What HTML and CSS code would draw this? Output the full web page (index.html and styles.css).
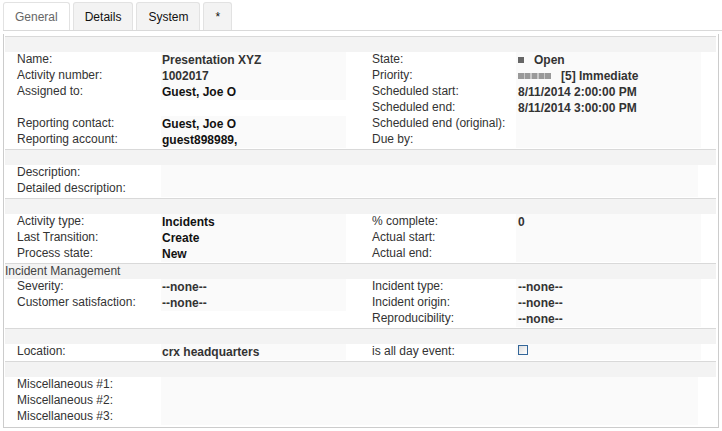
FILE: index.html
```html
<!DOCTYPE html>
<html lang="en">
<head>
<meta charset="utf-8">
<title>Presentation XYZ</title>
<link rel="stylesheet" href="styles.css">
</head>
<body>
<div class="tabs" role="tablist">
  <button class="tab active" type="button" role="tab" aria-selected="true">General</button>
  <button class="tab" type="button" role="tab">Details</button>
  <button class="tab" type="button" role="tab">System</button>
  <button class="tab" type="button" role="tab">*</button>
</div>
<main class="panel">
  <section class="group">
    <h2></h2>
    <div class="columns">
      <dl>
        <dt>Name:</dt><dd>Presentation XYZ</dd>
        <dt>Activity number:</dt><dd>1002017</dd>
        <dt>Assigned to:</dt><dd class="ref">Guest, Joe O</dd>
        <dt></dt><dd class="blank"></dd>
        <dt>Reporting contact:</dt><dd class="ref">Guest, Joe O</dd>
        <dt>Reporting account:</dt><dd class="ref">guest898989,</dd>
      </dl>
      <dl class="second">
        <dt>State:</dt>
        <dd class="rated"><svg class="state" viewBox="0 0 6 6"><path fill="#666" d="M0 0h6v6H0z"/></svg>Open</dd>
        <dt>Priority:</dt>
        <dd class="rated"><svg class="priority" viewBox="0 0 33 6"><path fill="#c8c8c8" d="M0 0h33v6H0z"/><path fill="#999" d="M0 0h6v6H0zM7 0h5v6H7zM14 0h5v6h-5zM21 0h5v6h-5zM27 0h6v6h-6z"/></svg>[5] Immediate</dd>
        <dt>Scheduled start:</dt><dd>8/11/2014 2:00:00 PM</dd>
        <dt>Scheduled end:</dt><dd>8/11/2014 3:00:00 PM</dd>
        <dt>Scheduled end (original):</dt><dd></dd>
        <dt>Due by:</dt><dd></dd>
      </dl>
    </div>
  </section>
  <section class="group">
    <h2></h2>
    <dl class="wide">
      <dt>Description:</dt><dd></dd>
      <dt>Detailed description:</dt><dd></dd>
    </dl>
  </section>
  <section class="group">
    <h2></h2>
    <div class="columns">
      <dl>
        <dt>Activity type:</dt><dd class="ref">Incidents</dd>
        <dt>Last Transition:</dt><dd class="ref">Create</dd>
        <dt>Process state:</dt><dd class="ref">New</dd>
      </dl>
      <dl class="second">
        <dt>% complete:</dt><dd>0</dd>
        <dt>Actual start:</dt><dd></dd>
        <dt>Actual end:</dt><dd></dd>
      </dl>
    </div>
  </section>
  <section class="group">
    <h2>Incident Management</h2>
    <div class="columns">
      <dl>
        <dt>Severity:</dt><dd>--none--</dd>
        <dt>Customer satisfaction:</dt><dd>--none--</dd>
      </dl>
      <dl class="second">
        <dt>Incident type:</dt><dd>--none--</dd>
        <dt>Incident origin:</dt><dd>--none--</dd>
        <dt>Reproducibility:</dt><dd>--none--</dd>
      </dl>
    </div>
  </section>
  <section class="group">
    <h2></h2>
    <div class="columns">
      <dl>
        <dt>Location:</dt><dd>crx headquarters</dd>
      </dl>
      <dl class="second">
        <dt><label for="all-day">is all day event:</label></dt><dd><input id="all-day" type="checkbox"></dd>
      </dl>
    </div>
  </section>
  <section class="group">
    <h2></h2>
    <dl class="wide">
      <dt>Miscellaneous #1:</dt><dd></dd>
      <dt>Miscellaneous #2:</dt><dd></dd>
      <dt>Miscellaneous #3:</dt><dd></dd>
    </dl>
  </section>
</main>
</body>
</html>
```

FILE: styles.css
```css
* {
  box-sizing: border-box;
}

body {
  margin: 0;
  padding-top: 2px;
  background: #fff;
  color: #333;
  font: 12px/16px "Liberation Sans", Arial, sans-serif;
}

.tabs {
  display: flex;
  gap: 3px;
  height: 29px;
  margin-left: 3px;
  border-bottom: 1px solid #d9d9d9;
}

.tab {
  padding: 0 11px;
  border: 1px solid #e2e2e2;
  border-bottom: 0;
  border-radius: 3px 3px 0 0;
  background: #f3f3f3;
  color: #111;
  font: inherit;
}

.tab.active {
  background: #fff;
  color: #666;
}

.panel {
  margin: 3px 3px 0;
  padding: 2px 1px 1px;
  border: 1px solid #ccc;
  border-top: 0;
}

.group {
  padding-bottom: 1px;
  margin-right: 1px;
}

h2 {
  height: 16px;
  margin: 0;
  border-top: 1px solid #d9d9d9;
  background: #f3f3f3;
  color: #444;
  font-size: 12px;
  font-weight: normal;
  line-height: 15px;
}

.columns {
  display: grid;
  grid-template-columns: 1fr 1fr;
  column-gap: 26px;
  padding: 0 15px 0 12px;
}

dl {
  display: grid;
  grid-template-columns: 144px 1fr;
  grid-auto-rows: 16px;
  margin: 0;
}

.wide {
  padding: 0 18px 0 12px;
}

dt {
  line-height: 14px;
  white-space: nowrap;
}

dd {
  margin: 0;
  padding-left: 1px;
  background: #fafafa;
  font-weight: bold;
  white-space: nowrap;
}

.second dd {
  padding-left: 2px;
}

.ref {
  color: #111;
}

.blank {
  background: none;
}

.rated {
  display: flex;
  align-items: center;
  gap: 10px;
}

.rated svg {
  height: 6px;
}

.state {
  width: 6px;
}

.priority {
  width: 33px;
}

input {
  display: block;
  appearance: none;
  width: 10px;
  height: 10px;
  margin: 1px 0 0;
  border: 1px solid #336699;
  background: linear-gradient(135deg, #ddd, #fff);
}
```
